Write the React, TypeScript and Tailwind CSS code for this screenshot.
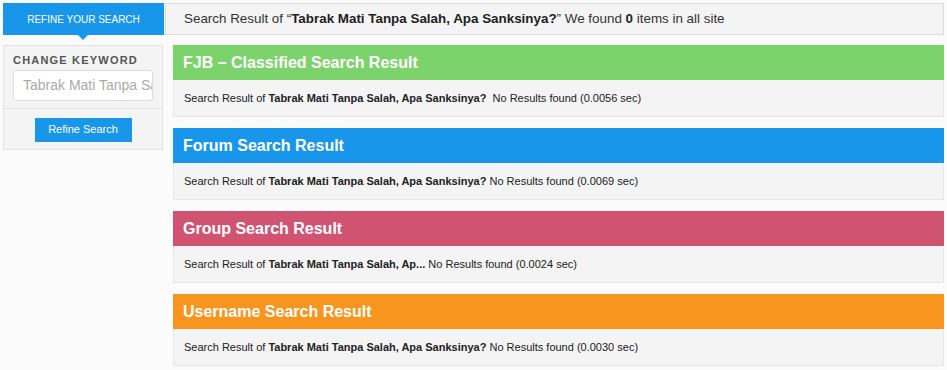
const sections = [
  { title: 'FJB – Classified Search Result', color: 'bg-[#7dd36b]', term: 'Tabrak Mati Tanpa Salah, Apa Sanksinya?', gap: true, time: '0.0056' },
  { title: 'Forum Search Result', color: 'bg-[#1896e9]', term: 'Tabrak Mati Tanpa Salah, Apa Sanksinya?', gap: false, time: '0.0069' },
  { title: 'Group Search Result', color: 'bg-[#d05472]', term: 'Tabrak Mati Tanpa Salah, Ap...', gap: false, time: '0.0024' },
  { title: 'Username Search Result', color: 'bg-[#f7951f]', term: 'Tabrak Mati Tanpa Salah, Apa Sanksinya?', gap: false, time: '0.0030' },
];

export default function App() {
  return (
    <div className="min-h-[370px] w-[947px] bg-[#fbfbfb] pl-[3px] pt-[3px] font-['Liberation_Sans',Arial,sans-serif] text-[#222]">
      {/* top row */}
      <div className="flex h-[32px] w-[941px]">
        <div className="relative flex w-[161px] items-center justify-center bg-[#1896e9] text-[10px] text-white">
          REFINE YOUR SEARCH
          <div className="absolute left-[75px] top-full h-0 w-0 border-x-[5px] border-t-[5px] border-x-transparent border-t-[#1896e9]" />
        </div>
        <div className="ml-[1px] flex flex-1 items-center border border-[#dcdcdc] bg-[#f4f4f4] pl-[18px] text-[13.4px] text-[#333]">
          <span>
            Search Result of “<b className="text-[#222]">Tabrak Mati Tanpa Salah, Apa Sanksinya?</b>” We found <b className="text-[#222]">0</b> items in all site
          </span>
        </div>
      </div>

      <div className="mt-[10px] flex gap-[10px]">
        {/* sidebar */}
        <div className="h-[105px] w-[160px] shrink-0 border border-[#e3e3e3] bg-[#f4f4f4]">
          <div className="px-[9px] pt-[6px]">
            <div className="text-[11px] font-bold tracking-[1.2px] text-[#555]">CHANGE KEYWORD</div>
            <input
              readOnly
              placeholder="Tabrak Mati Tanpa Salah, Apa Sanksinya?"
              className="mt-[1px] block h-[31px] w-[140px] rounded-[3px] border border-[#dcdcdc] bg-white pl-[9px] text-[14px] text-[#aaa] outline-none placeholder:text-[#aaa]"
            />
          </div>
          <div className="mt-[7px] border-t border-[#e3e3e3] pt-[9px]">
            <div className="mx-auto flex h-[24px] w-[97px] items-center justify-center bg-[#1896e9] text-[11px] text-white">
              Refine Search
            </div>
          </div>
        </div>

        {/* results */}
        <div className="flex w-[771px] flex-col gap-[11px]">
          {sections.map((s) => (
            <div key={s.title}>
              <div className={`flex h-[35px] items-center pl-[10px] text-[16px] font-bold text-white ${s.color}`}>
                {s.title}
              </div>
              <div className="flex h-[37px] items-center border border-t-0 border-[#e6e6e6] bg-[#f4f4f4] pl-[10px] text-[11px] text-[#222]">
                <span>
                  Search Result of <b>{s.term}</b>
                  {s.gap ? '\u00a0 ' : ' '}No Results found ({s.time} sec)
                </span>
              </div>
            </div>
          ))}
        </div>
      </div>
    </div>
  );
}
